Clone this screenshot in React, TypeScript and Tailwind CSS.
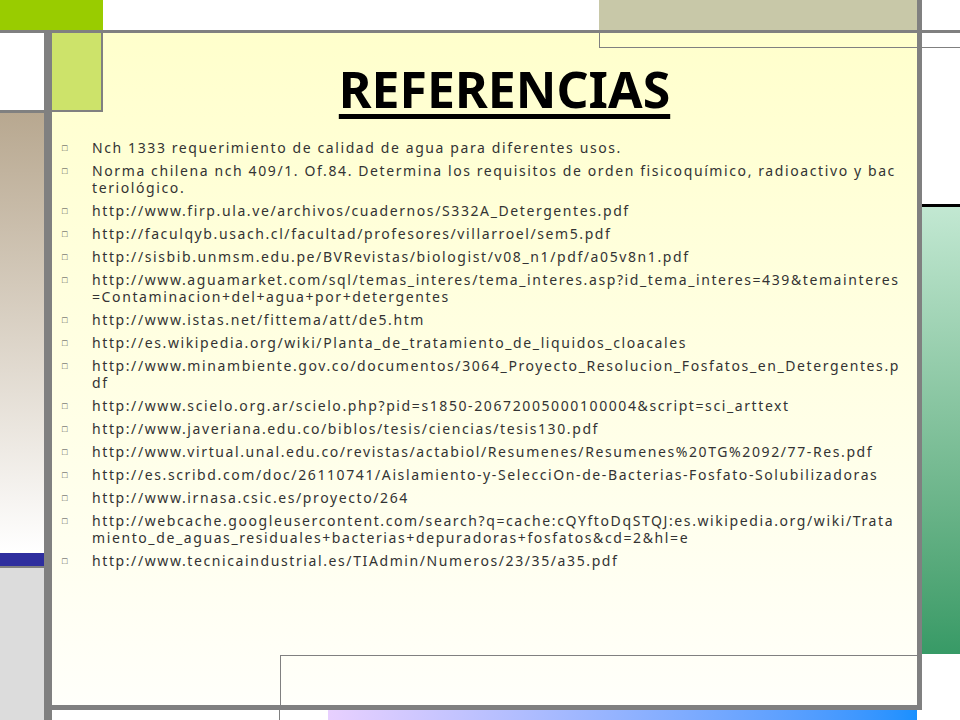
const refs = [
  "Nch 1333 requerimiento de calidad de agua para diferentes usos.",
  "Norma chilena nch 409/1. Of.84. Determina los requisitos de orden fisicoquímico, radioactivo y bacteriológico.",
  "http://www.firp.ula.ve/archivos/cuadernos/S332A_Detergentes.pdf",
  "http://faculqyb.usach.cl/facultad/profesores/villarroel/sem5.pdf",
  "http://sisbib.unmsm.edu.pe/BVRevistas/biologist/v08_n1/pdf/a05v8n1.pdf",
  "http://www.aguamarket.com/sql/temas_interes/tema_interes.asp?id_tema_interes=439&temainteres=Contaminacion+del+agua+por+detergentes",
  "http://www.istas.net/fittema/att/de5.htm",
  "http://es.wikipedia.org/wiki/Planta_de_tratamiento_de_liquidos_cloacales",
  "http://www.minambiente.gov.co/documentos/3064_Proyecto_Resolucion_Fosfatos_en_Detergentes.pdf",
  "http://www.scielo.org.ar/scielo.php?pid=s1850-20672005000100004&script=sci_arttext",
  "http://www.javeriana.edu.co/biblos/tesis/ciencias/tesis130.pdf",
  "http://www.virtual.unal.edu.co/revistas/actabiol/Resumenes/Resumenes%20TG%2092/77-Res.pdf",
  "http://es.scribd.com/doc/26110741/Aislamiento-y-SelecciOn-de-Bacterias-Fosfato-Solubilizadoras",
  "http://www.irnasa.csic.es/proyecto/264",
  "http://webcache.googleusercontent.com/search?q=cache:cQYftoDqSTQJ:es.wikipedia.org/wiki/Tratamiento_de_aguas_residuales+bacterias+depuradoras+fosfatos&cd=2&hl=e",
  "http://www.tecnicaindustrial.es/TIAdmin/Numeros/23/35/a35.pdf",
]

export default function App() {
  return (
    <div className="w-[960px] h-[720px] flex flex-col overflow-hidden bg-white">
      {/* top strip */}
      <div className="h-[30px] flex">
        <div className="w-[103px] bg-[#99cc00]" />
        <div className="flex-1 bg-white" />
        <div className="w-[318px] bg-[#c8c8a8]" />
        <div className="w-[5px] bg-[#808080]" />
        <div className="w-[38px] bg-white" />
      </div>
      <div className="h-[3px] bg-[#808080]" />

      <div className="flex-1 flex">
        {/* left column */}
        <div className="w-[44px] flex flex-col">
          <div className="h-[80px] bg-white border-b-[3px] border-[#808080]" />
          <div className="flex-1 bg-gradient-to-b from-[#b8a890] to-white" />
          <div className="h-[13px] bg-[#2e2e9e]" />
          <div className="h-[2px] bg-[#808080]" />
          <div className="h-[152px] bg-[#dcdcdc]" />
        </div>
        <div className="w-[8px] bg-[#808080]" />

        {/* main */}
        <div className="flex-1 flex flex-col">
          <div className="flex-1 relative bg-gradient-to-b from-[#ffffcc] to-[#fffffa]">
            <div className="absolute left-0 top-0 w-[51px] h-[79px] bg-[#cde36a] border-r-2 border-b-2 border-[#808080]" />
            <div className="absolute right-0 top-0 w-[318px] h-[15px] border-l border-b border-[#808080]" />
            <div className="absolute right-0 bottom-0 w-[637px] h-[50px] border-l border-t border-[#808080]" />
            <div className="relative flex flex-col">
              <h1 className="mt-[28px] text-center text-[50px] leading-[56px] font-bold underline decoration-[5px] underline-offset-[6px] text-black font-['Liberation_Sans',sans-serif] pl-[40px]">
                REFERENCIAS
              </h1>
              <ul className="mt-[22px] flex flex-col gap-[6px] pl-[10px] pr-[16px] text-[14px] leading-[17px] text-[#333333] font-['DejaVu_Sans',sans-serif] tracking-[1.6px]">
                {refs.map((r) => (
                  <li key={r} className="flex">
                    <span className="w-[30px] shrink-0 text-[9px] leading-[17px] text-[#444] tracking-normal">□</span>
                    <span className="break-all">{r}</span>
                  </li>
                ))}
              </ul>
            </div>
          </div>
          <div className="h-[5px] bg-[#808080]" />
          <div className="h-[10px] flex">
            <div className="w-[228px] bg-white border-r border-[#808080]" />
            <div className="w-[48px] bg-white" />
            <div className="flex-1 bg-gradient-to-r from-[#e8d0ff] to-[#1890ff]" />
          </div>
        </div>

        <div className="w-[5px] bg-[#808080] mb-[10px]" />

        {/* right column */}
        <div className="w-[38px] flex flex-col">
          <div className="h-[15px] bg-white border-b border-[#808080]" />
          <div className="h-[159px] bg-white border-b-[3px] border-black" />
          <div className="h-[447px] bg-gradient-to-b from-[#c2e8d2] to-[#379a66]" />
          <div className="flex-1 bg-white" />
        </div>
      </div>
    </div>
  )
}
